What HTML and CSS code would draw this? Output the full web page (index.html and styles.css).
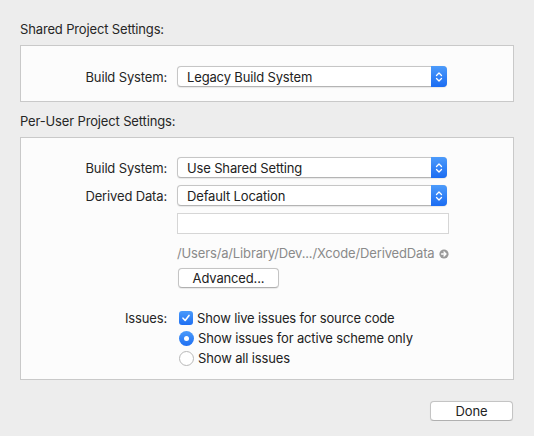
FILE: index.html
```html
<!DOCTYPE html>
<html lang="en">
<head>
    <meta charset="UTF-8">
    <meta name="viewport" content="width=device-width, initial-scale=1.0">
    <title>Project Settings</title>
    <link rel="stylesheet" href="styles.css">
</head>
<body>
    <div class="sheet">
        <div class="section-title">Shared Project Settings:</div>
        <div class="group-box shared">
            <div class="form-row">
                <span class="form-label">Build System:</span>
                <div class="popup">
                    <span class="popup-text">Legacy Build System</span>
                    <span class="popup-arrows">
                        <svg width="8" height="12" viewBox="0 0 8 12"><path d="M1.5 4.5 L4 2 L6.5 4.5 M1.5 7.5 L4 10 L6.5 7.5" fill="none" stroke="#fff" stroke-width="1.3" stroke-linecap="round" stroke-linejoin="round"/></svg>
                    </span>
                </div>
            </div>
        </div>

        <div class="section-title second">Per-User Project Settings:</div>
        <div class="group-box per-user">
            <div class="form-row">
                <span class="form-label">Build System:</span>
                <div class="popup">
                    <span class="popup-text">Use Shared Setting</span>
                    <span class="popup-arrows">
                        <svg width="8" height="12" viewBox="0 0 8 12"><path d="M1.5 4.5 L4 2 L6.5 4.5 M1.5 7.5 L4 10 L6.5 7.5" fill="none" stroke="#fff" stroke-width="1.3" stroke-linecap="round" stroke-linejoin="round"/></svg>
                    </span>
                </div>
            </div>
            <div class="form-row gap-small">
                <span class="form-label">Derived Data:</span>
                <div class="popup">
                    <span class="popup-text">Default Location</span>
                    <span class="popup-arrows">
                        <svg width="8" height="12" viewBox="0 0 8 12"><path d="M1.5 4.5 L4 2 L6.5 4.5 M1.5 7.5 L4 10 L6.5 7.5" fill="none" stroke="#fff" stroke-width="1.3" stroke-linecap="round" stroke-linejoin="round"/></svg>
                    </span>
                </div>
            </div>
            <div class="form-row gap-small">
                <span class="form-label"></span>
                <div class="text-field"></div>
            </div>
            <div class="form-row path-row">
                <span class="form-label"></span>
                <div class="path-text">
                    <span>/Users/a/Library/Dev.../Xcode/DerivedData</span>
                    <svg class="reveal-icon" width="10" height="10" viewBox="0 0 10 10"><circle cx="5" cy="5" r="4.6" fill="#9a9a9a"/><path d="M2.6 5 H7 M5 3 L7 5 L5 7" fill="none" stroke="#fff" stroke-width="1.3" stroke-linecap="round" stroke-linejoin="round"/></svg>
                </div>
            </div>
            <div class="form-row button-row">
                <span class="form-label"></span>
                <div><button class="push-button advanced">Advanced...</button></div>
            </div>
            <div class="form-row option-row issues-row">
                <span class="form-label">Issues:</span>
                <label class="option">
                    <span class="checkbox checked">
                        <svg width="10" height="10" viewBox="0 0 10 10"><path d="M2 5.2 L4.2 7.5 L8 2.4" fill="none" stroke="#fff" stroke-width="1.6" stroke-linecap="round" stroke-linejoin="round"/></svg>
                    </span>
                    Show live issues for source code
                </label>
            </div>
            <div class="form-row option-row">
                <span class="form-label"></span>
                <label class="option">
                    <span class="radio selected"></span>
                    Show issues for active scheme only
                </label>
            </div>
            <div class="form-row option-row">
                <span class="form-label"></span>
                <label class="option">
                    <span class="radio"></span>
                    Show all issues
                </label>
            </div>
        </div>

        <div class="footer">
            <button class="push-button done">Done</button>
        </div>
    </div>
</body>
</html>
```

FILE: styles.css
```css
body {
    margin: 0;
    background-color: #ededed;
    font-family: 'Inter', 'Liberation Sans', sans-serif;
    font-size: 13px;
    letter-spacing: -0.15px;
    color: #222;
}
.sheet {
    display: flex;
    flex-direction: column;
    padding: 21px 20px 0 20px;
}
.section-title {
    height: 16px;
    line-height: 16px;
    color: #262626;
}
.section-title.second {
    margin-top: 11px;
}
.group-box {
    margin-top: 8px;
    background-color: #fcfcfc;
    border: 1px solid #c9c9c9;
}
.group-box.shared {
    padding: 20px 0 14px 0;
}
.group-box.per-user {
    padding: 19px 0 11px 0;
}
.form-row {
    display: grid;
    grid-template-columns: 146px 272px;
    column-gap: 10px;
    align-items: center;
}
.form-row.gap-small {
    margin-top: 7px;
}
.form-label {
    text-align: right;
    color: #262626;
}
.popup {
    height: 21px;
    width: 270px;
    box-sizing: border-box;
    display: flex;
    align-items: center;
    justify-content: space-between;
    background-color: #fff;
    border: 1px solid #c6c6c6;
    border-bottom-color: #b4b4b4;
    border-radius: 4px;
    box-shadow: 0 0.5px 1px rgba(0, 0, 0, 0.08);
}
.popup-text {
    padding-left: 9px;
    color: #222;
}
.popup-arrows {
    width: 16px;
    height: 21px;
    margin: -1px -1px -1px 0;
    border-radius: 0 4px 4px 0;
    background: linear-gradient(#4c9bfb, #1b6cf2);
    display: flex;
    align-items: center;
    justify-content: center;
}
.text-field {
    height: 21px;
    width: 272px;
    box-sizing: border-box;
    background-color: #fff;
    border: 1px solid #d6d6d6;
}
.path-row {
    margin-top: 11px;
    height: 16px;
}
.path-text {
    display: flex;
    align-items: center;
    gap: 5px;
    color: #8a8a8a;
    white-space: nowrap;
    line-height: 16px;
}
.reveal-icon {
    flex-shrink: 0;
    margin-top: 1px;
}
.button-row {
    margin-top: 7px;
}
.push-button {
    height: 20px;
    box-sizing: border-box;
    font-family: inherit;
    font-size: 13px;
    letter-spacing: -0.15px;
    color: #222;
    background-color: #fff;
    border: 1px solid #c4c4c4;
    border-bottom-color: #b0b0b0;
    border-radius: 4px;
    box-shadow: 0 0.5px 1px rgba(0, 0, 0, 0.08);
    padding: 0;
}
.push-button.advanced {
    width: 101px;
    margin-left: 1px;
}
.option-row {
    height: 20px;
}
.issues-row {
    margin-top: 20px;
}
.option {
    display: flex;
    align-items: center;
    gap: 4px;
    padding-left: 2px;
    color: #222;
    white-space: nowrap;
}
.checkbox {
    width: 14px;
    height: 14px;
    box-sizing: border-box;
    border-radius: 3px;
    display: flex;
    align-items: center;
    justify-content: center;
}
.checkbox.checked {
    background: linear-gradient(#4a9bfb, #1f6ff2);
}
.radio {
    width: 15px;
    height: 15px;
    box-sizing: border-box;
    border-radius: 50%;
    background-color: #fff;
    border: 1px solid #b8b8b8;
    display: flex;
    align-items: center;
    justify-content: center;
}
.radio.selected {
    border: none;
    background: linear-gradient(#4a9bfb, #1f6ff2);
}
.radio.selected::after {
    content: '';
    width: 5px;
    height: 5px;
    border-radius: 50%;
    background-color: #fff;
}
.footer {
    display: flex;
    justify-content: flex-end;
    margin-top: 21px;
}
.push-button.done {
    width: 83px;
    margin-right: 1px;
}
```
